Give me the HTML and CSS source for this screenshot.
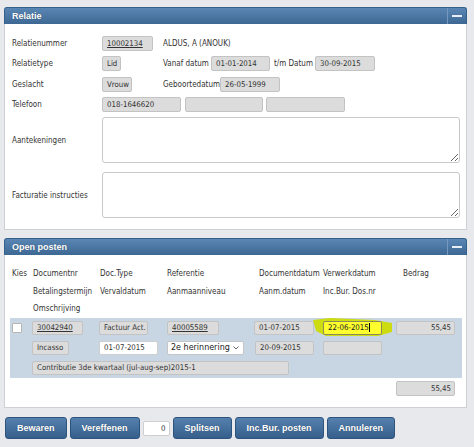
FILE: index.html
```html
<!DOCTYPE html>
<html lang="nl">
<head>
<meta charset="utf-8">
<title>Relatie</title>
<link rel="stylesheet" href="styles.css">
</head>
<body>
<div class="page">
  <section class="panel">
    <div class="panel-head"><span class="title">Relatie</span><span class="toggle"><i></i></span></div>
    <div class="panel-body relatie">
      <div class="row">
        <span class="lbl">Relatienummer</span>
        <span class="cell1"><span class="fld link w51">10002134</span></span>
        <span class="txt">ALDUS, A (ANOUK)</span>
      </div>
      <div class="row">
        <span class="lbl">Relatietype</span>
        <span class="cell1"><span class="fld w19">Lid</span></span>
        <span class="txt vanaf">Vanaf datum</span>
        <span class="fld w59">01-01-2014</span>
        <span class="txt tm">t/m Datum</span>
        <span class="fld w60">30-09-2015</span>
      </div>
      <div class="row">
        <span class="lbl">Geslacht</span>
        <span class="cell1"><span class="fld w30">Vrouw</span></span>
        <span class="txt geb">Geboortedatum</span>
        <span class="fld w60">26-05-1999</span>
      </div>
      <div class="row tel">
        <span class="lbl">Telefoon</span>
        <span class="fld w79">018-1646620</span>
        <span class="fld w78"></span>
        <span class="fld w79"></span>
      </div>
      <div class="row tall">
        <span class="lbl">Aantekeningen</span>
        <textarea class="area"></textarea>
      </div>
      <div class="row tall second">
        <span class="lbl">Facturatie instructies</span>
        <textarea class="area"></textarea>
      </div>
    </div>
  </section>

  <section class="panel">
    <div class="panel-head"><span class="title">Open posten</span><span class="toggle"><i></i></span></div>
    <div class="panel-body posten">
      <div class="grid heads">
        <span class="h kies">Kies</span>
        <span class="h">Documentnr</span>
        <span class="h">Doc.Type</span>
        <span class="h">Referentie</span>
        <span class="h off">Documentdatum</span>
        <span class="h">Verwerkdatum</span>
        <span class="h bed">Bedrag</span>

        <span class="h"></span>
        <span class="h">Betalingstermijn</span>
        <span class="h">Vervaldatum</span>
        <span class="h">Aanmaanniveau</span>
        <span class="h off">Aanm.datum</span>
        <span class="h">Inc.Bur. Dos.nr</span>
        <span class="h"></span>

        <span class="h"></span>
        <span class="h">Omschrijving</span>
      </div>

      <div class="grid block">
        <span class="cell"><span class="check"></span></span>
        <span class="cell"><span class="fld link w51">30042940</span></span>
        <span class="cell"><span class="fld w49">Factuur Act.</span></span>
        <span class="cell"><span class="fld link w52 ml1">40005589</span></span>
        <span class="cell"><span class="fld w60">01-07-2015</span></span>
        <span class="cell mark">
          <svg class="marker" width="81" height="19" viewBox="0 0 81 19" aria-hidden="true"><path d="M1 2 L18 0 L62 2 L80 5 L80 14 L66 18 L14 18 L4 13 Z" fill="#ccdc10"/></svg>
          <span class="fld yellow w59 ml1">22-06-2015<span class="caret"></span></span>
        </span>
        <span class="cell"><span class="fld num w59 ml1">55,45</span></span>

        <span class="cell"></span>
        <span class="cell"><span class="fld w37">Incasso</span></span>
        <span class="cell"><span class="fld white w59">01-07-2015</span></span>
        <span class="cell"><span class="fld select w77 ml1">2e herinnering<svg class="chev" width="6" height="4" viewBox="0 0 6 4"><path d="M0.5 0.5 L3 3 L5.5 0.5" fill="none" stroke="#666" stroke-width="1"/></svg></span></span>
        <span class="cell"><span class="fld w59 ml1">20-09-2015</span></span>
        <span class="cell"><span class="fld w59 ml1"></span></span>
        <span class="cell"></span>

        <span class="cell"></span>
        <span class="cell span"><span class="fld w257">Contributie 3de kwartaal (jul-aug-sep)2015-1</span></span>
      </div>

      <div class="total"><span class="fld num w59">55,45</span></div>
    </div>
  </section>

  <div class="actions">
    <button class="btn">Bewaren</button>
    <button class="btn">Vereffenen</button>
    <span class="fld white num count">0</span>
    <button class="btn">Splitsen</button>
    <button class="btn">Inc.Bur. posten</button>
    <button class="btn">Annuleren</button>
  </div>
</div>
</body>
</html>
```
FILE: styles.css
```css
* { box-sizing: border-box; }
html, body { margin: 0; }
body {
  background: #e7e9ed;
  font-family: "DejaVu Sans Condensed", "Liberation Sans", sans-serif;
  font-size: 8px;
  color: #333;
  width: 474px;
  height: 447px;
  overflow: hidden;
}
.page { padding: 7px 0 0 4px; }
.panel { width: 463px; }
.panel + .panel { margin-top: 8px; }

.panel-head {
  height: 17px;
  display: flex;
  align-items: center;
  justify-content: space-between;
  background: linear-gradient(#5a86b4, #3d6894);
  border: 1px solid #35608c;
  border-bottom: 0;
  border-radius: 3px 3px 0 0;
  color: #fff;
}
.title {
  font: bold 9px "Liberation Sans", sans-serif;
  padding-left: 7px;
  text-shadow: 0 0 1px rgba(0,0,0,.35);
}
.toggle {
  width: 19px;
  height: 100%;
  border-left: 1px solid #7598bf;
  display: flex;
  align-items: center;
  justify-content: center;
}
.toggle i { display: block; width: 10px; height: 2px; background: #e9eef5; }

.panel-body {
  background: #fff;
  border: 1px solid #cdd1d6;
  border-top: 0;
}

/* Relatie */
.relatie {
  padding: 12px 5px 11px 7px;
  display: flex;
  flex-direction: column;
  gap: 5.3px;
}
.row { display: flex; align-items: center; height: 15px; }
.row.tall { height: 46px; }
.row.second { margin-top: 3.7px; }
.lbl { width: 90px; flex: none; white-space: nowrap; }
.cell1 { width: 61px; flex: none; display: flex; }
.txt { white-space: nowrap; flex: none; }
.vanaf { width: 48px; }
.tm { width: 41px; margin-left: 4px; }
.geb { width: 57px; }
.tel .fld + .fld { margin-left: 3.5px; }

.area {
  width: 358px;
  height: 46px;
  border: 1px solid #c9c9c9;
  border-radius: 3px;
  background: #fff;
  resize: both;
  margin: 0;
  padding: 2px;
}

/* fields */
.fld {
  display: inline-flex;
  align-items: center;
  flex: none;
  height: 15px;
  padding: 0 3px 0 4px;
  background: #dcdcdc;
  border: 1px solid #c3c3c3;
  border-radius: 2px;
  font-family: "DejaVu Sans Condensed", "DejaVu Sans", sans-serif;
  font-size: 7.8px;
  color: #333;
  white-space: nowrap;
  overflow: hidden;
}
.fld.link { text-decoration: underline; }
.fld.white { background: #fff; border-color: #cfcfcf; }
.fld.num { justify-content: flex-end; }
.w19 { width: 19px; }
.w30 { width: 30px; }
.w37 { width: 37px; }
.w49 { width: 49px; }
.w51 { width: 51px; }
.w52 { width: 52px; }
.w59 { width: 59px; }
.w60 { width: 60px; }
.w77 { width: 77px; }
.w78 { width: 78px; }
.w79 { width: 79px; }
.w257 { width: 257px; }
.ml1 { margin-left: 1px; }

/* Open posten */
.posten { padding: 10px 4px 11px 5px; }
.grid {
  display: grid;
  grid-template-columns: 22px 67px 67px 88px 68px 73px 67px;
}
.heads { grid-auto-rows: 17.5px; }
.h { display: flex; align-items: center; padding-left: 1px; white-space: nowrap; }
.h.kies { padding-left: 2px; }
.h.off { padding-left: 5px; }
.h.bed { padding-left: 8px; }

.block {
  background: #c8d5e2;
  padding: 3px 0;
  row-gap: 5.5px;
  grid-auto-rows: 14.5px;
}
.block .fld { height: 14.5px; }
.cell { display: flex; align-items: center; position: relative; }
.cell.span { grid-column: 2 / 8; }
.check {
  width: 10px;
  height: 10px;
  margin-left: 2px;
  background: #fff;
  border: 1px solid #b5b5b5;
  border-radius: 1px;
}
.mark .marker { position: absolute; left: -10px; top: -3px; }
.fld.yellow {
  position: relative;
  background: #ffff2e;
  border-color: #8a8a5a;
  color: #222;
}
.caret { display: inline-block; width: 1px; height: 9px; background: #000; margin-left: 0.5px; }
.fld.select {
  background: #fff;
  border-color: #c6c6c6;
  font-family: "DejaVu Sans", sans-serif;
  font-size: 8px;
  color: #222;
  justify-content: space-between;
  padding: 0 4px 0 3px;
}
.chev { flex: none; }

.total {
  display: flex;
  justify-content: flex-end;
  padding-right: 7px;
  margin-top: 3px;
}

/* actions */
.actions {
  display: flex;
  align-items: center;
  gap: 3px;
  margin: 9px 0 0 1px;
}
.btn {
  height: 22px;
  padding: 0 11px;
  margin: 0;
  border: 1px solid #2d547f;
  border-radius: 3px;
  background: linear-gradient(#5580ae, #365f8b);
  color: #fff;
  font: bold 9px "Liberation Sans", sans-serif;
  text-shadow: 0 0 1px rgba(0,0,0,.35);
}
.count { width: 27px; height: 15px; }
```
